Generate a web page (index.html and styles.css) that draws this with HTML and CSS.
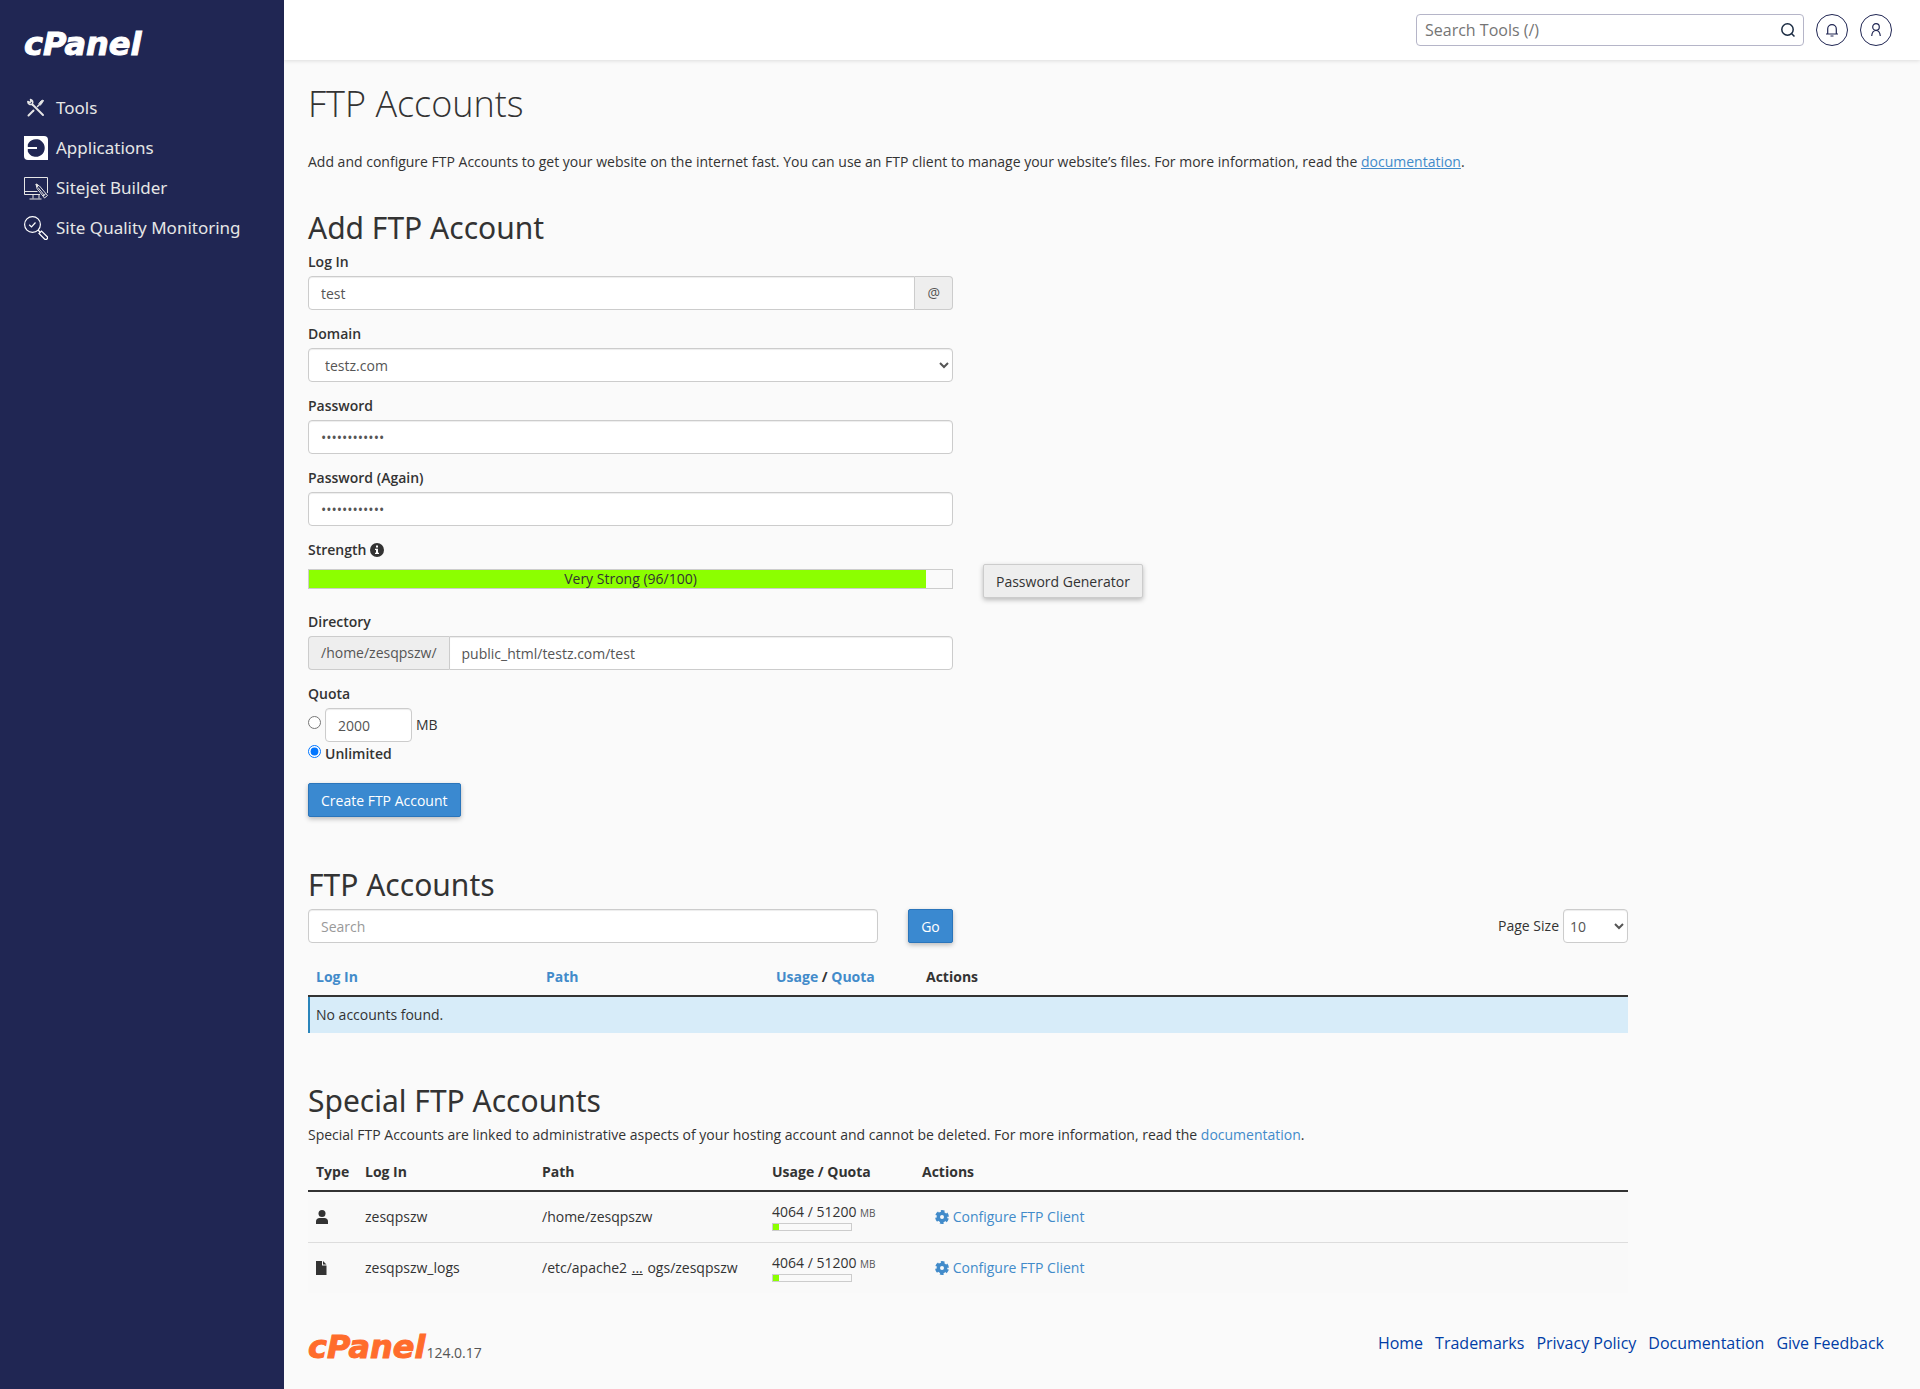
FILE: index.html
```html
<!DOCTYPE html>
<html lang="en">
<head>
  <meta charset="UTF-8">
  <meta name="viewport" content="width=device-width, initial-scale=1.0">
  <title>cPanel - FTP Accounts</title>
  <link rel="stylesheet" href="styles.css">
</head>
<body>
  <aside class="sidebar">
    <a href="#" class="logo">cPanel</a>
    <nav class="nav">
      <a href="#" class="nav-link">
        <svg class="nav-icon" viewBox="0 0 24 24" fill="none" stroke="#e6e6e6" stroke-linecap="round">
          <path d="M4.500 19.500L9.500 14.500" stroke-width="2" />
          <path d="M8.500 8.500L19 19" stroke-width="2" />
          <path d="M3.800 5.500C3.800 8 6 9.200 8.200 8.200C9.500 6 8.500 3.800 6.500 3.500M3.800 5.500L6 6.500L7 5.500L6.500 3.500" stroke-width="1.500" />
          <path d="M13.500 10.500L15.500 8.500" stroke-width="1.500" />
          <path d="M15 7.500L17 5L19 4L19.500 4.500L18.500 6.500L16.500 9Z" fill="#e6e6e6" stroke-width="1" />
        </svg>
        Tools
      </a>
      <a href="#" class="nav-link">
        <svg class="nav-icon" viewBox="0 0 24 24">
          <path d="M0 0H20a4 4 0 0 1 4 4V24H4a4 4 0 0 1-4-4Z" fill="#fff" />
          <path d="M3.800 8.600A8.800 8.800 0 1 1 3.800 15.400Z" fill="#202653" />
          <path d="M3 12H13" stroke="#fff" stroke-width="2" />
        </svg>
        Applications
      </a>
      <a href="#" class="nav-link">
        <svg class="nav-icon" viewBox="0 0 24 24" fill="none" stroke="#e6e6e6" stroke-width="1">
          <path d="M16 18.500H.500V1.500H23.500V17" />
          <path d="M.500 15.500H13.500" />
          <path d="M9 18.500V22.500M15 18.500V22.500M5.500 23H17.500" />
          <path d="M12 8L15.500 10L23.500 19.500L20.500 22L13 12.500Z" />
          <path d="M14 11.500L20.500 19.500M19 20L22 17.500" />
          <path d="M12 8L14.500 9.500L13 11Z" fill="#e6e6e6" />
        </svg>
        Sitejet Builder
      </a>
      <a href="#" class="nav-link">
        <svg class="nav-icon" viewBox="0 0 24 24" fill="none" stroke="#fff" stroke-width="1.200">
          <circle cx="8.500" cy="8.500" r="7.900" />
          <path d="M5.200 8.800L7.500 11L11.500 6.500" />
          <path d="M14 14L16 16" />
          <path d="M15 17.500L17.500 15L23 20.500a1.700 1.700 0 0 1-2.500 2.500Z" />
        </svg>
        Site Quality Monitoring
      </a>
    </nav>
  </aside>

  <div class="page">
    <header class="topbar">
      <div class="tool-search">
        <input type="text" class="tool-search-input" placeholder="Search Tools (/)" aria-label="Search Tools">
        <button type="button" class="tool-search-btn" aria-label="Search">
          <svg width="16" height="16" viewBox="0 0 16 16" fill="none" stroke="#1a2b42" stroke-width="1.500">
            <circle cx="7.500" cy="7.500" r="5.700" />
            <path d="M11.500 11.500L14.500 14.500" />
          </svg>
        </button>
      </div>
      <button type="button" class="round-btn" aria-label="Notifications">
        <svg width="16" height="16" viewBox="0 0 16 16" fill="none" stroke="#202653" stroke-width="1.200">
          <path d="M2 12H14M3.700 12V7a4.300 4.300 0 0 1 8.600 0V12M6.500 14H9.500" />
        </svg>
      </button>
      <button type="button" class="round-btn" aria-label="Account">
        <svg width="16" height="16" viewBox="0 0 16 16" fill="none" stroke="#202653" stroke-width="1.200">
          <circle cx="8" cy="5" r="3.300" />
          <path d="M3.700 14C4 10.500 5.500 8.500 8 8.500S12 10.500 12.300 14" />
        </svg>
      </button>
    </header>

    <main class="content">
      <h1>FTP Accounts</h1>
      <p class="intro">Add and configure FTP Accounts to get your website on the internet fast. You can use an FTP client to manage your website’s files. For more information, read the <a href="#" class="underlined">documentation</a>.</p>

      <div class="main-col">
        <section class="section">
          <h2>Add FTP Account</h2>
          <form>
            <div class="form-row">
              <label for="login">Log In</label>
              <div class="input-group">
                <input type="text" id="login" class="form-control" value="test">
                <span class="addon addon-right">@</span>
              </div>
            </div>
            <div class="form-row">
              <label for="domain">Domain</label>
              <select id="domain" class="form-control">
                <option>testz.com</option>
              </select>
            </div>
            <div class="form-row">
              <label for="password">Password</label>
              <input type="password" id="password" class="form-control" value="abcdefghijkl">
            </div>
            <div class="form-row">
              <label for="password2">Password (Again)</label>
              <input type="password" id="password2" class="form-control" value="abcdefghijkl">
            </div>
            <div class="form-row">
              <span class="label">Strength
                <svg class="info" viewBox="0 0 14 14">
                  <circle cx="7" cy="7" r="7" fill="#333" />
                  <path d="M6 2.500H8V4.500H6ZM5 5.700H8V9.700H9V11H5V9.700H6V7H5Z" fill="#fff" />
                </svg>
              </span>
              <div class="strength">
                <div class="strength-bar" style="width: 96%"></div>
                <span class="strength-text">Very Strong (96/100)</span>
              </div>
              <button type="button" class="btn">Password Generator</button>
            </div>
            <div class="form-row">
              <label for="directory">Directory</label>
              <div class="input-group">
                <span class="addon addon-left">/home/zesqpszw/</span>
                <input type="text" id="directory" class="form-control" value="public_html/testz.com/test">
              </div>
            </div>
            <div class="quota">
              <span class="label">Quota</span>
              <div class="quota-line">
                <input type="radio" name="quota" class="quota-radio" aria-label="Limited quota">
                <input type="text" class="form-control quota-size" value="2000" aria-label="Quota in MB">
                <span>MB</span>
              </div>
              <div class="quota-line unlimited">
                <input type="radio" name="quota" class="quota-radio" id="unlimited" checked>
                <label for="unlimited">Unlimited</label>
              </div>
            </div>
            <button type="submit" class="btn btn-primary">Create FTP Account</button>
          </form>
        </section>

        <section class="section">
          <h2>FTP Accounts</h2>
          <div class="list-tools">
            <div class="list-search">
              <input type="text" class="form-control" placeholder="Search" aria-label="Search accounts">
              <button type="button" class="btn btn-primary btn-go">Go</button>
            </div>
            <div class="page-size">
              <label for="pagesize">Page Size</label>
              <select id="pagesize" class="form-control">
                <option>10</option>
              </select>
            </div>
          </div>
          <table>
            <thead>
              <tr>
                <th class="col-path"><a href="#">Log In</a></th>
                <th class="col-path"><a href="#">Path</a></th>
                <th class="col-usage"><a href="#">Usage</a> / <a href="#">Quota</a></th>
                <th>Actions</th>
              </tr>
            </thead>
            <tbody>
              <tr class="empty">
                <td colspan="4">No accounts found.</td>
              </tr>
            </tbody>
          </table>
        </section>

        <section>
          <h2>Special FTP Accounts</h2>
          <p class="note">Special FTP Accounts are linked to administrative aspects of your hosting account and cannot be deleted. For more information, read the <a href="#">documentation</a>.</p>
          <table class="special">
            <thead>
              <tr>
                <th class="col-type">Type</th>
                <th class="col-login">Log In</th>
                <th class="col-path">Path</th>
                <th class="col-usage">Usage / Quota</th>
                <th>Actions</th>
              </tr>
            </thead>
            <tbody>
              <tr>
                <td>
                  <svg class="type-icon" viewBox="0 0 12 14" fill="#333">
                    <circle cx="6" cy="3.500" r="3.500" />
                    <path d="M0 14V11.500C0 9.500 1.500 8 3.500 8H8.500C10.500 8 12 9.500 12 11.500V14Z" />
                  </svg>
                </td>
                <td>zesqpszw</td>
                <td>/home/zesqpszw</td>
                <td>
                  <div class="usage">4064 / 51200 <small>MB</small></div>
                  <div class="usage-track"><div class="usage-bar" style="width: 8%"></div></div>
                </td>
                <td>
                  <a href="#" class="action">
                    <svg class="gear" viewBox="0 0 14 14" fill="none" stroke="#428bca">
                      <circle cx="7" cy="7" r="3.700" stroke-width="3.400" />
                      <circle cx="7" cy="7" r="5.700" stroke-width="2.400" stroke-dasharray="3.570 2.400" stroke-dashoffset="-1.200" />
                    </svg>
                    Configure FTP Client</a>
                </td>
              </tr>
              <tr>
                <td>
                  <svg class="type-icon" viewBox="0 0 12 14" fill="#333">
                    <path d="M0 0H6V4.500H10.500V14H0ZM7 0L10.500 3.500H7Z" />
                  </svg>
                </td>
                <td>zesqpszw_logs</td>
                <td>/etc/apache2 <u class="dots">...</u> ogs/zesqpszw</td>
                <td>
                  <div class="usage">4064 / 51200 <small>MB</small></div>
                  <div class="usage-track"><div class="usage-bar" style="width: 8%"></div></div>
                </td>
                <td>
                  <a href="#" class="action">
                    <svg class="gear" viewBox="0 0 14 14" fill="none" stroke="#428bca">
                      <circle cx="7" cy="7" r="3.700" stroke-width="3.400" />
                      <circle cx="7" cy="7" r="5.700" stroke-width="2.400" stroke-dasharray="3.570 2.400" stroke-dashoffset="-1.200" />
                    </svg>
                    Configure FTP Client</a>
                </td>
              </tr>
            </tbody>
          </table>
        </section>
      </div>
    </main>

    <footer class="footer">
      <div class="version">
        <a href="#" class="logo logo-orange">cPanel</a>
        <span>124.0.17</span>
      </div>
      <nav class="footer-links">
        <a href="#">Home</a>
        <a href="#">Trademarks</a>
        <a href="#">Privacy Policy</a>
        <a href="#">Documentation</a>
        <a href="#">Give Feedback</a>
      </nav>
    </footer>
  </div>
</body>
</html>
```
FILE: styles.css
```css
* {
  box-sizing: border-box;
}
body {
  display: flex;
  min-height: 100vh;
  margin: 0;
  font-family: "Open Sans", sans-serif;
  font-size: 14px;
  line-height: 20px;
  color: #333;
  background: #fafafa;
}
a {
  color: #428bca;
  text-decoration: none;
}
input, select, button {
  font-family: inherit;
}

/* sidebar */
.sidebar {
  width: 284px;
  flex-shrink: 0;
  padding: 24px;
  background: #202653;
}
.logo {
  display: block;
  font-family: "DejaVu Sans", sans-serif;
  font-size: 32px;
  font-weight: bold;
  font-style: italic;
  line-height: 40px;
  color: #fff;
  -webkit-text-stroke: 1px currentColor;
}
.logo-orange {
  color: #ff6c2c;
}
.nav {
  margin-top: 24px;
}
.nav-link {
  display: flex;
  align-items: center;
  gap: 8px;
  height: 40px;
  font-family: "Noto Sans", sans-serif;
  font-size: 17px;
  color: #e6e6e6;
}
.nav-icon {
  width: 24px;
  height: 24px;
}

/* top bar */
.page {
  flex: 1;
  display: flex;
  flex-direction: column;
  min-width: 0;
}
.topbar {
  display: flex;
  align-items: center;
  justify-content: flex-end;
  gap: 12px;
  height: 60px;
  padding: 0 28px;
  background: #fff;
  box-shadow: 0 1px 4px rgba(0, 0, 0, 0.12);
}
.tool-search {
  display: flex;
  width: 388px;
  height: 32px;
  border: 1px solid #b5b5c8;
  border-radius: 4px;
}
.tool-search-input {
  flex: 1;
  padding: 0 8px;
  border: 0;
  background: transparent;
  font-size: 16px;
}
.tool-search-input::placeholder {
  color: #757575;
}
.tool-search-btn {
  display: flex;
  align-items: center;
  padding: 0 7px;
  border: 0;
  background: transparent;
}
.round-btn {
  display: flex;
  align-items: center;
  justify-content: center;
  width: 32px;
  height: 32px;
  padding: 0;
  border: 1px solid #202653;
  border-radius: 50%;
  background: #fff;
}

/* content */
.content {
  padding: 20px 22px 0 24px;
}
h1 {
  margin: 0 0 24px;
  font-size: 36px;
  font-weight: 300;
  line-height: 48px;
}
h2 {
  margin: 0 0 6px;
  font-family: "Noto Sans", sans-serif;
  font-size: 30px;
  font-weight: 400;
  line-height: 36px;
}
.intro {
  margin: 0 0 38px;
}
.underlined {
  text-decoration: underline;
}
.main-col {
  width: calc((100% + 30px) * 10 / 12 - 30px);
}
.section {
  margin-bottom: 50px;
}

/* form */
.form-row {
  display: grid;
  grid-template-columns: 1fr 1fr;
  column-gap: 30px;
  align-items: start;
  margin-bottom: 14px;
}
.form-row label, .label {
  grid-column: 1 / -1;
  margin-bottom: 4px;
  font-weight: 600;
}
.info {
  width: 14px;
  height: 14px;
  vertical-align: -2px;
}
.form-control {
  width: 100%;
  height: 34px;
  padding: 6px 12px;
  border: 1px solid #ccc;
  border-radius: 4px;
  background: #fff;
  box-shadow: inset 0 1px 1px rgba(0, 0, 0, 0.075);
  font-size: 14px;
  color: #555;
}
.form-control::placeholder {
  color: #999;
}
.input-group {
  display: flex;
}
.input-group .form-control {
  flex: 1;
  min-width: 0;
}
.addon {
  height: 34px;
  padding: 6px 12px;
  border: 1px solid #ccc;
  background: #eee;
  color: #555;
}
.addon-right {
  border-left: 0;
  border-radius: 0 4px 4px 0;
}
.addon-left {
  border-right: 0;
  border-radius: 4px 0 0 4px;
}
.input-group .form-control:first-child {
  border-radius: 4px 0 0 4px;
}
.input-group .form-control:last-child {
  border-radius: 0 4px 4px 0;
}
.strength {
  position: relative;
  height: 20px;
  margin-top: 5px;
  border: 1px solid #ccc;
}
.strength-bar {
  height: 100%;
  background: #8cff00;
}
.strength-text {
  position: absolute;
  inset: 0;
  line-height: 18px;
  text-align: center;
}
.btn {
  justify-self: start;
  height: 34px;
  padding: 0 12px;
  border: 1px solid #ccc;
  border-radius: 2px;
  background: #eee;
  box-shadow: 0 2px 5px rgba(0, 0, 0, 0.26);
  font-size: 14px;
  color: #333;
}
.btn-primary {
  border-color: #2a75bb;
  background: #3a89d0;
  color: #fff;
}
.quota {
  margin-bottom: 17px;
}
.quota .label {
  display: block;
}
.quota-line {
  display: flex;
  align-items: center;
  gap: 4px;
}
.quota-radio {
  width: 13px;
  height: 13px;
  margin: 0 0 5px;
}
.quota-size {
  width: 87px;
}
.unlimited {
  height: 24px;
  font-weight: 600;
}

/* account lists */
.list-tools {
  display: grid;
  grid-template-columns: 1fr 1fr;
  gap: 30px;
  margin-bottom: 16px;
}
.list-search {
  display: flex;
  gap: 30px;
}
.btn-go {
  width: 45px;
  flex-shrink: 0;
}
.page-size {
  display: flex;
  align-items: center;
  justify-content: flex-end;
  gap: 4px;
}
.page-size .form-control {
  width: 65px;
  padding: 6px 2px;
}
table {
  width: 100%;
  table-layout: fixed;
  border-collapse: collapse;
}
th, td {
  padding: 8px;
  text-align: left;
}
th {
  border-bottom: 2px solid #333;
  font-weight: 700;
}
.empty td {
  background: #d7ecf9;
  box-shadow: inset 2px 0 #2a85bb;
}
.note {
  margin: 0 0 9px;
}
.special tbody td {
  height: 51px;
  padding: 0 8px;
  background: #f9f9f9;
}
.special tbody tr + tr td {
  border-top: 1px solid #ddd;
}
.col-type {
  width: 49px;
}
.col-login {
  width: 177px;
}
.col-path {
  width: 230px;
}
.col-usage {
  width: 150px;
}
.type-icon {
  display: block;
  width: 12px;
  height: 14px;
}
.dots {
  margin: 0 1px;
}
small {
  font-size: 10px;
  color: #555;
}
.usage-track {
  width: 80px;
  height: 8px;
  border: 1px solid #ccc;
}
.usage-bar {
  height: 100%;
  background: #8cff00;
}
.action {
  margin-left: 13px;
}
.gear {
  width: 14px;
  height: 14px;
  vertical-align: -2px;
}

/* footer */
.footer {
  display: flex;
  justify-content: space-between;
  padding: 34px 36px 0 24px;
}
.version {
  display: flex;
  align-items: baseline;
  gap: 1px;
  color: #555;
}
.footer-links {
  display: flex;
  gap: 12px;
  padding-top: 6px;
  font-size: 16px;
}
.footer-links a {
  color: #003da6;
}
```
